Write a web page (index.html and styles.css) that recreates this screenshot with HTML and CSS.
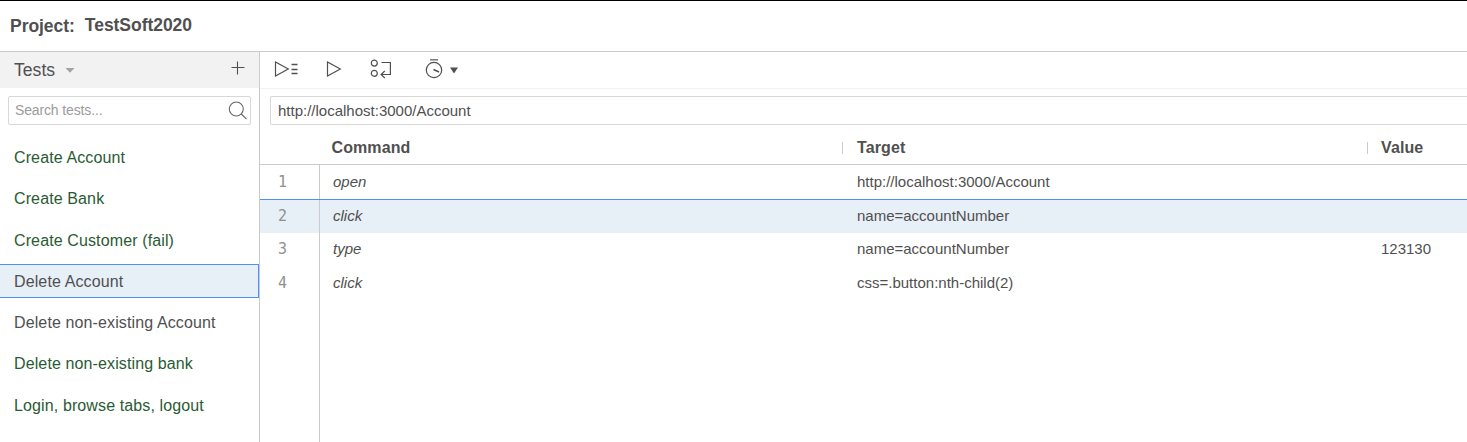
FILE: index.html
```html
<!DOCTYPE html>
<html lang="en">
<head>
<meta charset="utf-8">
<title>TestSoft2020</title>
<link rel="stylesheet" href="styles.css">
</head>
<body>
<header class="project"><span>Project:</span><span class="project-name">TestSoft2020</span></header>
<div class="workspace">
  <aside class="sidebar">
    <div class="sidebar-head">
      <span class="sidebar-title">Tests</span>
      <svg class="caret" width="10" height="5" viewBox="0 0 10 5"><path d="M0.5 0h9L5 4.8z" fill="#a3a3a3"/></svg>
      <svg class="add" width="14" height="14" viewBox="0 0 14 14"><path d="M6.5 .5v13M.5 6.5h13" stroke="#505050" stroke-width="1.1"/></svg>
    </div>
    <div class="search">
      <span>Search tests...</span>
      <svg width="20" height="20" viewBox="0 0 20 20" fill="none" stroke="#666" stroke-width="1.1"><circle cx="8.3" cy="8" r="7"/><path d="M13.3 13l5.2 5.2"/></svg>
    </div>
    <ul class="tests">
      <li class="test passed">Create Account</li>
      <li class="test passed">Create Bank</li>
      <li class="test passed">Create Customer (fail)</li>
      <li class="test selected">Delete Account</li>
      <li class="test">Delete non-existing Account</li>
      <li class="test passed">Delete non-existing bank</li>
      <li class="test passed">Login, browse tabs, logout</li>
    </ul>
  </aside>
  <main class="editor">
    <div class="toolbar">
      <svg class="run-all" width="25" height="18" viewBox="0 0 25 18" fill="none" stroke="#505050"><path d="M1.5 2v14L14.3 9z" stroke-width="1.2"/><path d="M17.5 4.5h6M17.5 9.5h6M17.5 13.5h6" stroke-width="1.4"/></svg>
      <svg class="run" width="16" height="18" viewBox="0 0 16 18" fill="none" stroke="#505050" stroke-width="1.2"><path d="M1.5 2v14L14.3 9z"/></svg>
      <svg class="step" width="22" height="20" viewBox="0 0 22 20" fill="none" stroke="#505050" stroke-width="1.2"><circle cx="4.3" cy="4.1" r="3"/><circle cx="4.3" cy="14.3" r="3"/><path d="M11.5 3.5h8.9v12h-9M14.8 12l-3.7 3.5 3.7 3.5"/></svg>
      <svg class="speed" width="18" height="22" viewBox="0 0 18 22" fill="none" stroke="#505050" stroke-width="1.2"><circle cx="9" cy="13" r="7.7"/><path d="M5 2.8h8" stroke="#777" stroke-width="1.5"/><path d="M8.5 12.5l5.5 2.5" stroke-width="1.5"/></svg>
      <svg class="speed-caret" width="8" height="7" viewBox="0 0 8 7"><path d="M0 .5h8L4 6.5z" fill="#505050"/></svg>
    </div>
    <div class="url">http://localhost:3000/Account</div>
    <div class="row head">
      <div class="cell"></div>
      <div class="cell">Command</div>
      <div class="cell divided target">Target</div>
      <div class="cell divided">Value</div>
    </div>
    <div class="commands">
      <div class="row"><div class="num">1</div><div class="cell command">open</div><div class="cell">http://localhost:3000/Account</div><div class="cell"></div></div>
      <div class="row active"><div class="num">2</div><div class="cell command">click</div><div class="cell">name=accountNumber</div><div class="cell"></div></div>
      <div class="row"><div class="num">3</div><div class="cell command">type</div><div class="cell">name=accountNumber</div><div class="cell">123130</div></div>
      <div class="row"><div class="num">4</div><div class="cell command">click</div><div class="cell">css=.button:nth-child(2)</div><div class="cell"></div></div>
      <div class="row filler"><div class="num"></div></div>
    </div>
  </main>
</div>
</body>
</html>
```
FILE: styles.css
```css
* { box-sizing: border-box; }
body {
  margin: 0;
  height: 442px;
  overflow: hidden;
  display: flex;
  flex-direction: column;
  background: #fff;
  color: #505050;
  font: 15px/18px "Liberation Sans", Arial, sans-serif;
}
svg { display: block; flex: none; }

.project {
  flex: none;
  height: 52px;
  padding: 15px 10px 0;
  display: flex;
  gap: 10px;
  border-top: 1px solid #000;
  border-bottom: 1px solid #cbcbcb;
  font-size: 17.5px;
  line-height: 20px;
  font-weight: bold;
  letter-spacing: -0.04px;
}
.project-name { margin-top: -1px; }

.workspace { flex: 1; min-height: 0; display: flex; }

.sidebar { flex: none; width: 260px; border-right: 1px solid #cbcbcb; }
.sidebar-head {
  height: 36px;
  padding: 0 14px;
  display: flex;
  align-items: center;
  background: #f2f2f2;
}
.sidebar-title { font-size: 17.6px; line-height: 20px; }
.caret { margin-left: 10px; }
.add { margin-left: auto; margin-bottom: 4px; }
.search {
  width: 243px;
  height: 29px;
  margin: 8px 8px 0;
  padding: 0 2px 0 6px;
  display: flex;
  align-items: center;
  justify-content: space-between;
  border: 1px solid #d8d8d8;
  border-radius: 2px;
  color: #9b9b9b;
  font-size: 14px;
  letter-spacing: -0.14px;
}
.search span { margin-top: -1px; }
.tests {
  list-style: none;
  margin: 15px 0 0;
  padding: 0;
  display: flex;
  flex-direction: column;
  gap: 7.3px;
  font-size: 16px;
  letter-spacing: 0.12px;
}
.test {
  height: 34px;
  padding: 0 14px;
  line-height: 36px;
  width: 259px;
}
.passed { color: #2a5b33; }
.selected {
  background: #e7eff7;
  border: 1px solid #4d90fe;
  border-left: 0;
  line-height: 34px;
}

.editor { flex: 1; min-width: 0; display: flex; flex-direction: column; }
.toolbar {
  flex: none;
  height: 37px;
  padding: 0 14px 2px;
  display: flex;
  align-items: center;
  border-bottom: 1px solid #f2f2f2;
}
.run { margin-left: 27px; }
.step { margin-left: 28px; }
.speed { margin: 0 0 2px 33px; }
.speed-caret { margin: 2px 0 0 7px; }
.url {
  flex: none;
  height: 29px;
  margin: 7px 0 0 10px;
  padding-left: 7px;
  border: 1px solid #d8d8d8;
  border-right: 0;
  border-radius: 2px 0 0 2px;
  line-height: 28px;
}

.row {
  display: grid;
  grid-template-columns: 60px 523px 524px 1fr;
  height: 33.6px;
  align-items: center;
}
.head {
  grid-template-columns: 60px 522px 525px 1fr;
  flex: none;
  height: 40px;
  padding-top: 7px;
  border-bottom: 1px solid #cbcbcb;
  font-size: 16px;
  font-weight: bold;
  letter-spacing: 0.1px;
}
.cell { padding-left: 14px; }
.head .cell { padding-left: 11.5px; }
.head .divided {
  height: 12px;
  padding-left: 13px;
  border-left: 1px solid #cbcbcb;
  line-height: 12px;
}
.head .target { padding-left: 14px; }
.commands { flex: 1; display: flex; flex-direction: column; }
.commands .row { flex: none; }
.commands .active {
  height: 34px;
  background: #e7eff7;
  border-top: 1px solid #4d90fe;
}
.commands .filler { flex: 1; }
.command { padding-left: 13px; font-style: italic; }
.num {
  align-self: stretch;
  display: flex;
  align-items: center;
  padding-left: 18px;
  border-right: 1px solid #cbcbcb;
  color: #909090;
  font: 15px "DejaVu Sans Mono", monospace;
}
```
